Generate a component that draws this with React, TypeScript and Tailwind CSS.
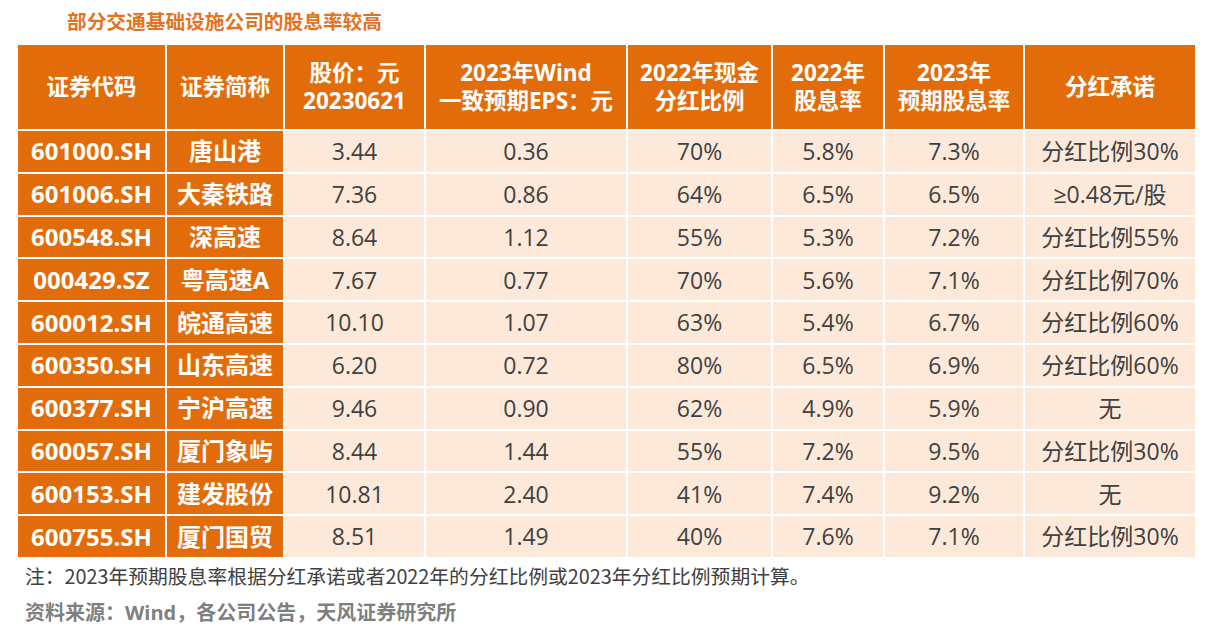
import React from "react";

const rows = [
  ["601000.SH", "唐山港", "3.44", "0.36", "70%", "5.8%", "7.3%", "分红比例30%"],
  ["601006.SH", "大秦铁路", "7.36", "0.86", "64%", "6.5%", "6.5%", "≥0.48元/股"],
  ["600548.SH", "深高速", "8.64", "1.12", "55%", "5.3%", "7.2%", "分红比例55%"],
  ["000429.SZ", "粤高速A", "7.67", "0.77", "70%", "5.6%", "7.1%", "分红比例70%"],
  ["600012.SH", "皖通高速", "10.10", "1.07", "63%", "5.4%", "6.7%", "分红比例60%"],
  ["600350.SH", "山东高速", "6.20", "0.72", "80%", "6.5%", "6.9%", "分红比例60%"],
  ["600377.SH", "宁沪高速", "9.46", "0.90", "62%", "4.9%", "5.9%", "无"],
  ["600057.SH", "厦门象屿", "8.44", "1.44", "55%", "7.2%", "9.5%", "分红比例30%"],
  ["600153.SH", "建发股份", "10.81", "2.40", "41%", "7.4%", "9.2%", "无"],
  ["600755.SH", "厦门国贸", "8.51", "1.49", "40%", "7.6%", "7.1%", "分红比例30%"],
];

const headers = [
  ["证券代码"],
  ["证券简称"],
  ["股价：元", "20230621"],
  ["2023年Wind", "一致预期EPS：元"],
  ["2022年现金", "分红比例"],
  ["2022年", "股息率"],
  ["2023年", "预期股息率"],
  ["分红承诺"],
];

export default function App() {
  return (
    <div
      className="w-[1210px] h-[631px] bg-white relative"
      style={{ fontFamily: '"Open Sans", "Noto Sans CJK SC", sans-serif' }}
    >
      <div className="pl-[67px] pt-[10px] h-[45px] text-[19.7px] leading-[24px] font-bold text-[#E4721E]">
        部分交通基础设施公司的股息率较高
      </div>

      <div className="ml-[18px] w-[1177px] grid grid-cols-[147px_116px_139px_200px_143px_110px_138px_170px] grid-rows-[84px_repeat(10,40.8px)] gap-[2px] bg-white">
        {headers.map((h, i) => (
          <div
            key={i}
            className="bg-[#E36C0A] text-white font-bold text-[22.5px] leading-[28px] flex flex-col items-center justify-center text-center"
          >
            {h.map((l) => (
              <span key={l}>{l}</span>
            ))}
          </div>
        ))}
        {rows.map((r) =>
          r.map((c, j) =>
            j < 2 ? (
              <div
                key={r[0] + j}
                className="bg-[#E36C0A] text-white font-bold text-[24px] flex items-center justify-center"
              >
                {c}
              </div>
            ) : (
              <div
                key={r[0] + j}
                className="bg-[#FDE9D9] text-[#404040] text-[23px] flex items-center justify-center"
              >
                {c}
              </div>
            )
          )
        )}
      </div>

      <div
        className="pl-[25px] pt-[6px] text-[19.8px] leading-[26px] text-[#404040]"
        style={{ fontFamily: '"Noto Sans CJK SC", sans-serif' }}
      >
        注：2023年预期股息率根据分红承诺或者2022年的分红比例或2023年分红比例预期计算。
      </div>
      <div className="pl-[25px] pt-[11px] text-[20px] leading-[26px] font-bold text-[#7F7F7F]">
        资料来源：Wind，各公司公告，天风证券研究所
      </div>
    </div>
  );
}
